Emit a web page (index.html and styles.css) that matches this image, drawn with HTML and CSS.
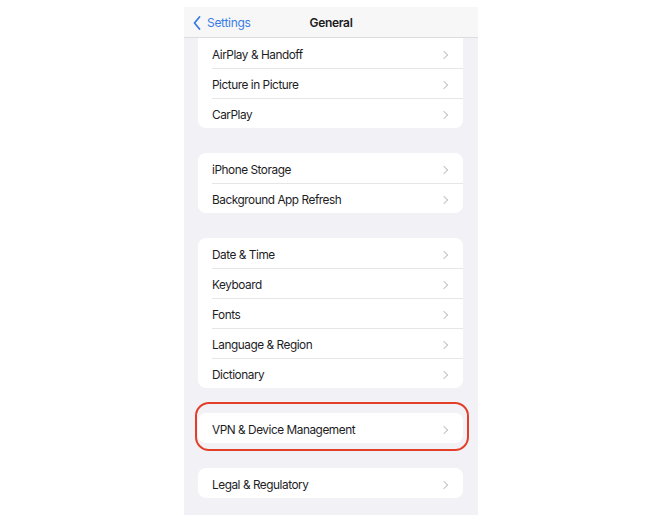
FILE: index.html
```html
<!DOCTYPE html>
<html lang="en">
<head>
    <meta charset="UTF-8">
    <meta name="viewport" content="width=device-width, initial-scale=1.0">
    <title>General</title>
    <link rel="stylesheet" href="styles.css">
</head>
<body>
    <!-- Pantalla del teléfono -->
    <div class="phone">
        <div class="navbar">
            <div class="back">
                <svg class="back-icon" width="8" height="14" viewBox="0 0 8 14">
                    <path d="M6.5 1 L1.5 7 L6.5 13" fill="none" stroke="#3a7ce6" stroke-width="1.8" stroke-linecap="round" stroke-linejoin="round"/>
                </svg>
                <span>Settings</span>
            </div>
            <div class="title">General</div>
        </div>

        <div class="content">
            <div class="group group-top">
                <div class="row"><span>AirPlay &amp; Handoff</span><i class="chevron"></i></div>
                <div class="row"><span>Picture in Picture</span><i class="chevron"></i></div>
                <div class="row"><span>CarPlay</span><i class="chevron"></i></div>
            </div>

            <div class="group">
                <div class="row"><span>iPhone Storage</span><i class="chevron"></i></div>
                <div class="row"><span>Background App Refresh</span><i class="chevron"></i></div>
            </div>

            <div class="group">
                <div class="row"><span>Date &amp; Time</span><i class="chevron"></i></div>
                <div class="row"><span>Keyboard</span><i class="chevron"></i></div>
                <div class="row"><span>Fonts</span><i class="chevron"></i></div>
                <div class="row"><span>Language &amp; Region</span><i class="chevron"></i></div>
                <div class="row"><span>Dictionary</span><i class="chevron"></i></div>
            </div>

            <div class="group highlighted">
                <div class="row"><span>VPN &amp; Device Management</span><i class="chevron"></i></div>
                <!-- Marco rojo dibujado encima -->
                <div class="highlight-ring"></div>
            </div>

            <div class="group">
                <div class="row"><span>Legal &amp; Regulatory</span><i class="chevron"></i></div>
            </div>
        </div>
    </div>
</body>
</html>
```

FILE: styles.css
```css
body {
    margin: 0;
    padding: 7px 0 0 184px;
    background-color: #ffffff;
    font-family: 'Inter', 'Liberation Sans', sans-serif;
}

.phone {
    width: 294px;
    height: 508px;
    background-color: #f2f2f6;
    display: flex;
    flex-direction: column;
}

.navbar {
    height: 30px;
    background-color: #f7f7f8;
    border-bottom: 1px solid #dcdcdf;
    display: flex;
    align-items: center;
    justify-content: center;
    position: relative;
}

.back {
    position: absolute;
    left: 9px;
    top: 8px;
    display: flex;
    align-items: center;
    gap: 6px;
    color: #3a7ce6;
    font-size: 12px;
    letter-spacing: -0.3px;
}

.title {
    font-size: 12px;
    font-weight: 600;
    color: #1c1c1e;
    letter-spacing: -0.3px;
    margin-top: 1px;
}

.content {
    display: flex;
    flex-direction: column;
    gap: 25px;
    padding: 0 15px 0 14px;
}

.group {
    background-color: #ffffff;
    border-radius: 8px;
    position: relative;
}

.group-top {
    border-top-left-radius: 0;
    border-top-right-radius: 0;
}

.row {
    height: 30px;
    box-sizing: border-box;
    margin-left: 14px;
    padding: 3px 14px 0 0;
    display: flex;
    align-items: center;
    justify-content: space-between;
    font-size: 11.8px;
    color: #1d1d1f;
    letter-spacing: -0.45px;
}

.row + .row {
    border-top: 1px solid #e6e6e8;
}

.chevron {
    width: 5px;
    height: 5px;
    border-top: 1.3px solid #c4c4c8;
    border-right: 1.3px solid #c4c4c8;
    transform: rotate(45deg);
    margin-right: 2px;
}

.highlight-ring {
    position: absolute;
    left: -3px;
    right: -6px;
    top: -11px;
    bottom: -8px;
    border: 2px solid #e23f29;
    border-radius: 14px;
}
```
